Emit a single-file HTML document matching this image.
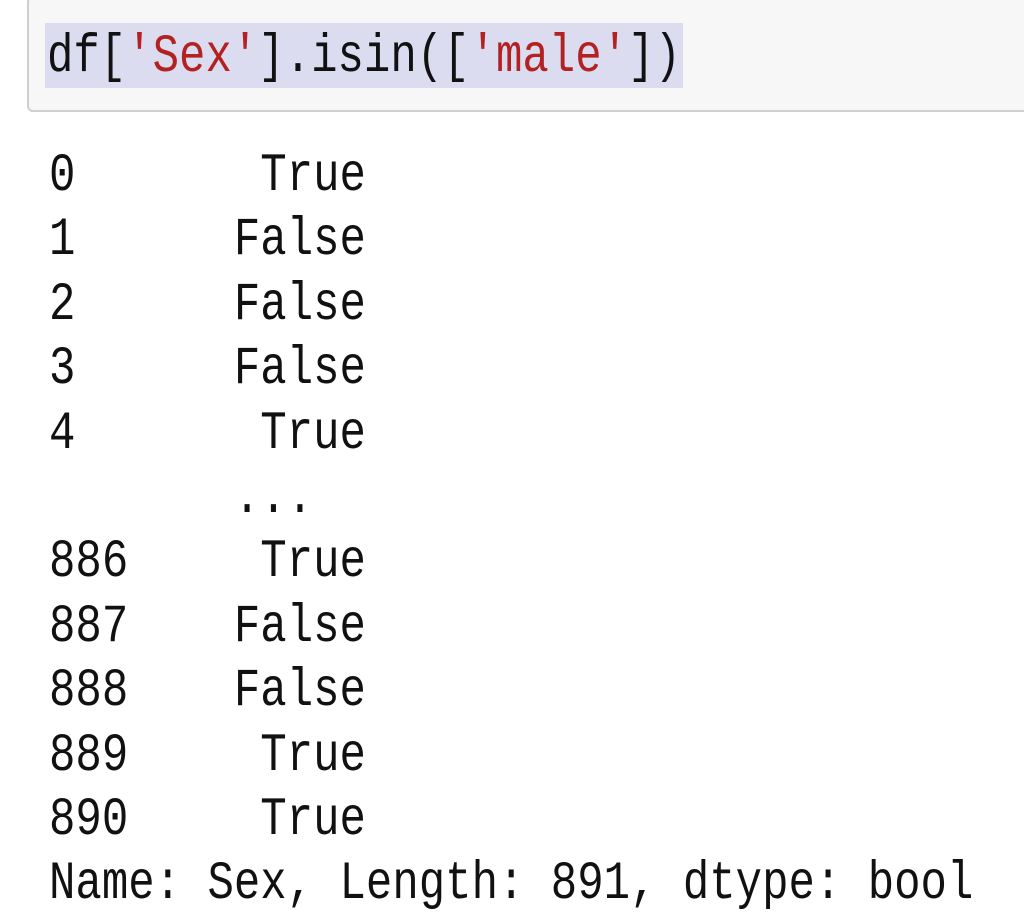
<!DOCTYPE html>
<html><head><meta charset="utf-8"><style>
html,body{margin:0;padding:0;background:#fff;width:1024px;height:923px;overflow:hidden;}
.box{position:absolute;left:27px;top:-4px;width:1010px;height:116px;background:#f7f7f7;border:2px solid #cfcfcf;border-radius:6px;box-sizing:border-box;}
.hl{position:absolute;left:45px;top:23px;width:638px;height:65px;background:#dcdcf0;}
.t{position:absolute;left:47px;font-family:"Liberation Mono",monospace;font-size:54px;line-height:64.4px;white-space:pre;color:#111;transform:scaleX(0.815);transform-origin:0 0;margin:0;}
.s{color:#b22222;}
</style></head><body>
<div class="box"></div>
<div class="hl"></div>
<pre class="t" style="top:26px">df[<span class="s">'Sex'</span>].isin([<span class="s">'male'</span>])</pre>
<pre class="t" style="top:145px;left:49px">0       True
1      False
2      False
3      False
4       True
       ...
886     True
887    False
888    False
889     True
890     True
Name: Sex, Length: 891, dtype: bool</pre>
</body></html>
